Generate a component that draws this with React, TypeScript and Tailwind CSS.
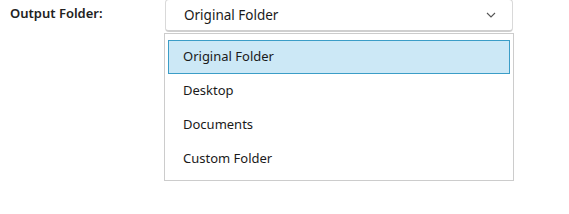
import React from "react";

const options = ["Original Folder", "Desktop", "Documents", "Custom Folder"];

export default function App() {
  const selected = "Original Folder";

  return (
    <div
      className="w-[569px] h-[214px] bg-white text-[#1a1a1a]"
      style={{ fontFamily: '"Noto Sans", "Open Sans", sans-serif' }}
    >
      <div className="flex items-start">
        <div className="w-[165px] pl-[10px] pt-[4px] text-[13px] font-semibold text-[#222]">
          Output Folder:
        </div>
        <div className="relative w-[348px]">
          {/* combobox */}
          <div className="h-[33px] -mt-[1px] flex items-center justify-between pl-[18px] pr-[16px] bg-white border border-[#d9d9d9] border-b-[2px] border-b-[#cfcfcf] rounded-[4px] text-[13.5px]">
            <span>{selected}</span>
            <svg width="10" height="6" viewBox="0 0 10 6" className="text-[#555]">
              <path d="M1 1l4 4 4-4" fill="none" stroke="currentColor" strokeWidth="1.1" />
            </svg>
          </div>

          {/* popup list */}
          <div className="absolute left-[-1px] top-[33px] w-[350px] h-[148px] bg-white border border-[#cccccc] px-[3px] pt-[6px]">
            {options.map((opt) => (
              <div
                key={opt}
                className={
                  opt === selected
                    ? "h-[34px] flex items-center pl-[14px] text-[13px] bg-[#cce8f6] border border-[#3b9dc7]"
                    : "h-[34px] flex items-center pl-[15px] text-[13px]"
                }
              >
                {opt}
              </div>
            ))}
          </div>
        </div>
      </div>
    </div>
  );
}
